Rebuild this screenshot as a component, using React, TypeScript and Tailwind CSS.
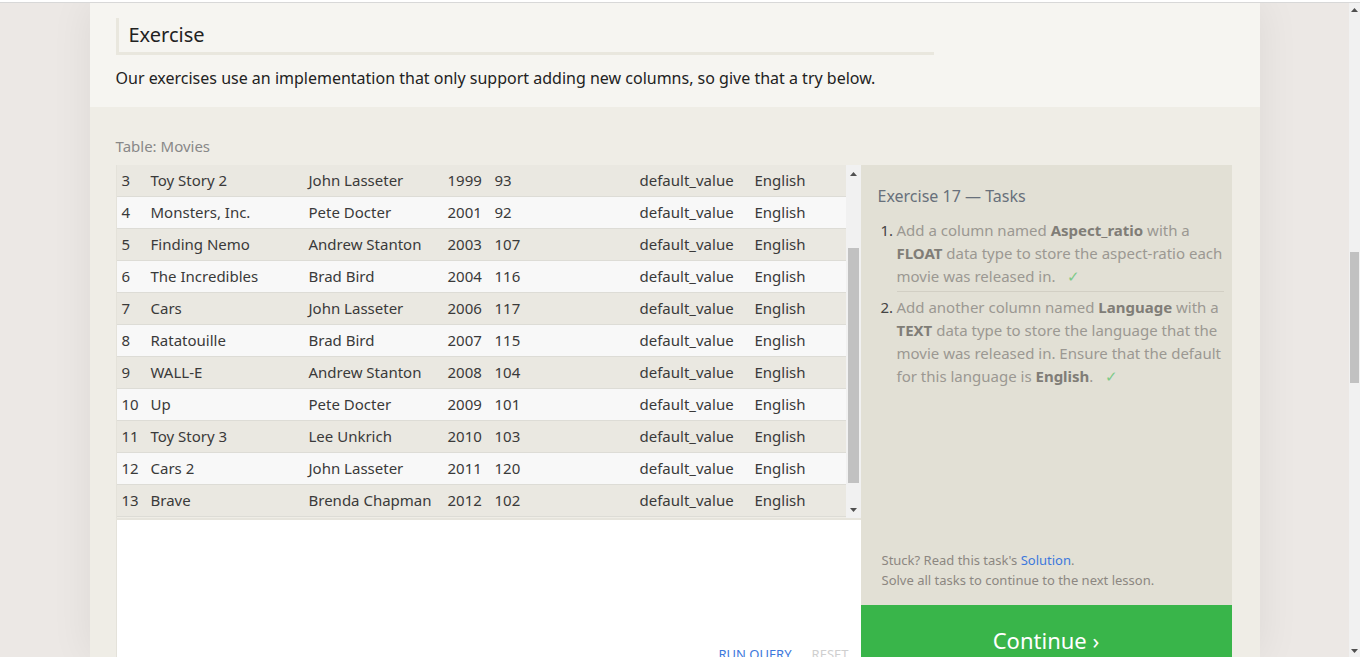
import React from 'react';

const rows = [
  [3, 'Toy Story 2', 'John Lasseter', 1999, 93],
  [4, 'Monsters, Inc.', 'Pete Docter', 2001, 92],
  [5, 'Finding Nemo', 'Andrew Stanton', 2003, 107],
  [6, 'The Incredibles', 'Brad Bird', 2004, 116],
  [7, 'Cars', 'John Lasseter', 2006, 117],
  [8, 'Ratatouille', 'Brad Bird', 2007, 115],
  [9, 'WALL-E', 'Andrew Stanton', 2008, 104],
  [10, 'Up', 'Pete Docter', 2009, 101],
  [11, 'Toy Story 3', 'Lee Unkrich', 2010, 103],
  [12, 'Cars 2', 'John Lasseter', 2011, 120],
  [13, 'Brave', 'Brenda Chapman', 2012, 102],
];

function Arrow({ up }: { up?: boolean }) {
  return (
    <svg width="7" height="4" viewBox="0 0 7 4" className="fill-[#505050]">
      {up ? <path d="M0 4 L3.5 0 L7 4 Z" /> : <path d="M0 0 L3.5 4 L7 0 Z" />}
    </svg>
  );
}

function Check() {
  return <span className="ml-3 text-[#7dca89]">✓</span>;
}

export default function App() {
  return (
    <div className="h-[657px] overflow-hidden bg-white flex flex-col text-[#333]" style={{ fontFamily: '"Noto Sans", "Open Sans", sans-serif' }}>
      <div className="h-[2px] shrink-0" />
      <div className="h-px shrink-0 bg-[#d8d8d8]" />
      <div className="flex flex-1 min-h-0">
        <main className="flex-1 flex justify-center bg-[#ece8e5] overflow-hidden">
          <div className="w-[1170px] shrink-0 flex flex-col shadow-[0_0_40px_rgba(0,0,0,0.07)]">
            <section className="bg-[#f6f5f1] px-[26px] pt-[15px] pb-[17px]">
              <div className="w-[818px] h-[37px] border-l-[3px] border-b-[3px] border-[#e9e7de] pl-[10px] flex items-center">
                <h2 className="text-[20px] text-[#222] leading-none">Exercise</h2>
              </div>
              <p className="mt-[11px] text-[16px] leading-[24px] text-[#222]">
                Our exercises use an implementation that only support adding new columns, so give that a try below.
              </p>
            </section>
            <section className="bg-[#efede6] pl-[26px] pr-[28px] pt-[29px] flex flex-col">
              <div className="text-[15px] leading-[20px] text-[#888]">Table: Movies</div>
              <div className="mt-[9px] flex">
                <div className="w-[745px] flex flex-col">
                  <div className="h-[353px] flex border-l border-[#e4e2da]">
                    <div className="flex-1 flex flex-col">
                      {rows.map((r, i) => (
                        <div
                          key={r[0]}
                          className={`h-[32px] shrink-0 flex items-center text-[15px] text-[#3a3a3a] border-b border-[#dddcd6] ${i % 2 === 0 ? 'bg-[#eae8e1]' : 'bg-[#f8f8f8]'}`}
                        >
                          <span className="w-[34px] pl-[5px] shrink-0">{r[0]}</span>
                          <span className="w-[158px] shrink-0">{r[1]}</span>
                          <span className="w-[139px] shrink-0">{r[2]}</span>
                          <span className="w-[47px] shrink-0">{r[3]}</span>
                          <span className="w-[145px] shrink-0">{r[4]}</span>
                          <span className="w-[115px] shrink-0">default_value</span>
                          <span>English</span>
                        </div>
                      ))}
                    </div>
                    <div className="w-[15px] bg-[#f1f1f1] flex flex-col items-center">
                      <div className="h-[17px] flex items-center justify-center"><Arrow up /></div>
                      <div className="h-[66px]" />
                      <div className="w-[11px] h-[235px] bg-[#c1c1c1]" />
                      <div className="flex-1" />
                      <div className="h-[17px] flex items-center justify-center"><Arrow /></div>
                    </div>
                  </div>
                  <div className="h-[2px] bg-[#e6e4dc]" />
                  <div className="h-[160px] bg-white border-l border-[#e4e2da] flex justify-end pr-[12px] pt-[125px]">
                    <div className="flex gap-[20px] text-[13px] leading-[18px]">
                      <span className="text-[#3d78dc]">RUN QUERY</span>
                      <span className="text-[#cfcfcf]">RESET</span>
                    </div>
                  </div>
                </div>
                <aside className="flex-1 flex flex-col bg-[#e2e0d5]">
                  <div className="h-[440px] pl-[17px] pr-[8px] pt-[20px] flex flex-col">
                    <h3 className="text-[16px] leading-[22px] text-[#68707b]">Exercise 17 — Tasks</h3>
                    <ol className="mt-[12px] text-[15px] leading-[23px] text-[#9b9892]">
                      <li className="flex">
                        <span className="w-[19px] pl-[3px] shrink-0 text-[#444]">1.</span>
                        <div className="flex-1 border-b border-[#d2cfc4] pb-[3px]">
                          Add a column named <b className="text-[#807d77]">Aspect_ratio</b> with a <b className="text-[#807d77]">FLOAT</b> data type to store the aspect-ratio each movie was released in.<Check />
                        </div>
                      </li>
                      <li className="flex pt-[4px]">
                        <span className="w-[19px] pl-[3px] shrink-0 text-[#444]">2.</span>
                        <div className="flex-1">
                          Add another column named <b className="text-[#807d77]">Language</b> with a <b className="text-[#807d77]">TEXT</b> data type to store the language that the movie was released in. Ensure that the default for this language is <b className="text-[#807d77]">English</b>.<Check />
                        </div>
                      </li>
                    </ol>
                    <div className="flex-1" />
                    <div className="pl-[4px] pb-[15px] text-[13px] leading-[20px] text-[#8c8781]">
                      <p>Stuck? Read this task's <span className="text-[#3c78dc]">Solution</span>.</p>
                      <p>Solve all tasks to continue to the next lesson.</p>
                    </div>
                  </div>
                  <div className="h-[70px] bg-[#39b54a] flex items-center justify-center text-white text-[22px]">
                    Continue ›
                  </div>
                </aside>
              </div>
            </section>
          </div>
        </main>
        <div className="w-[11px] bg-[#f1f1f1] flex flex-col items-center">
          <div className="h-[13px] flex items-center justify-center"><Arrow up /></div>
          <div className="h-[236px]" />
          <div className="w-[9px] h-[131px] bg-[#c1c1c1]" />
          <div className="flex-1" />
          <div className="h-[13px] flex items-center justify-center"><Arrow /></div>
        </div>
      </div>
    </div>
  );
}
